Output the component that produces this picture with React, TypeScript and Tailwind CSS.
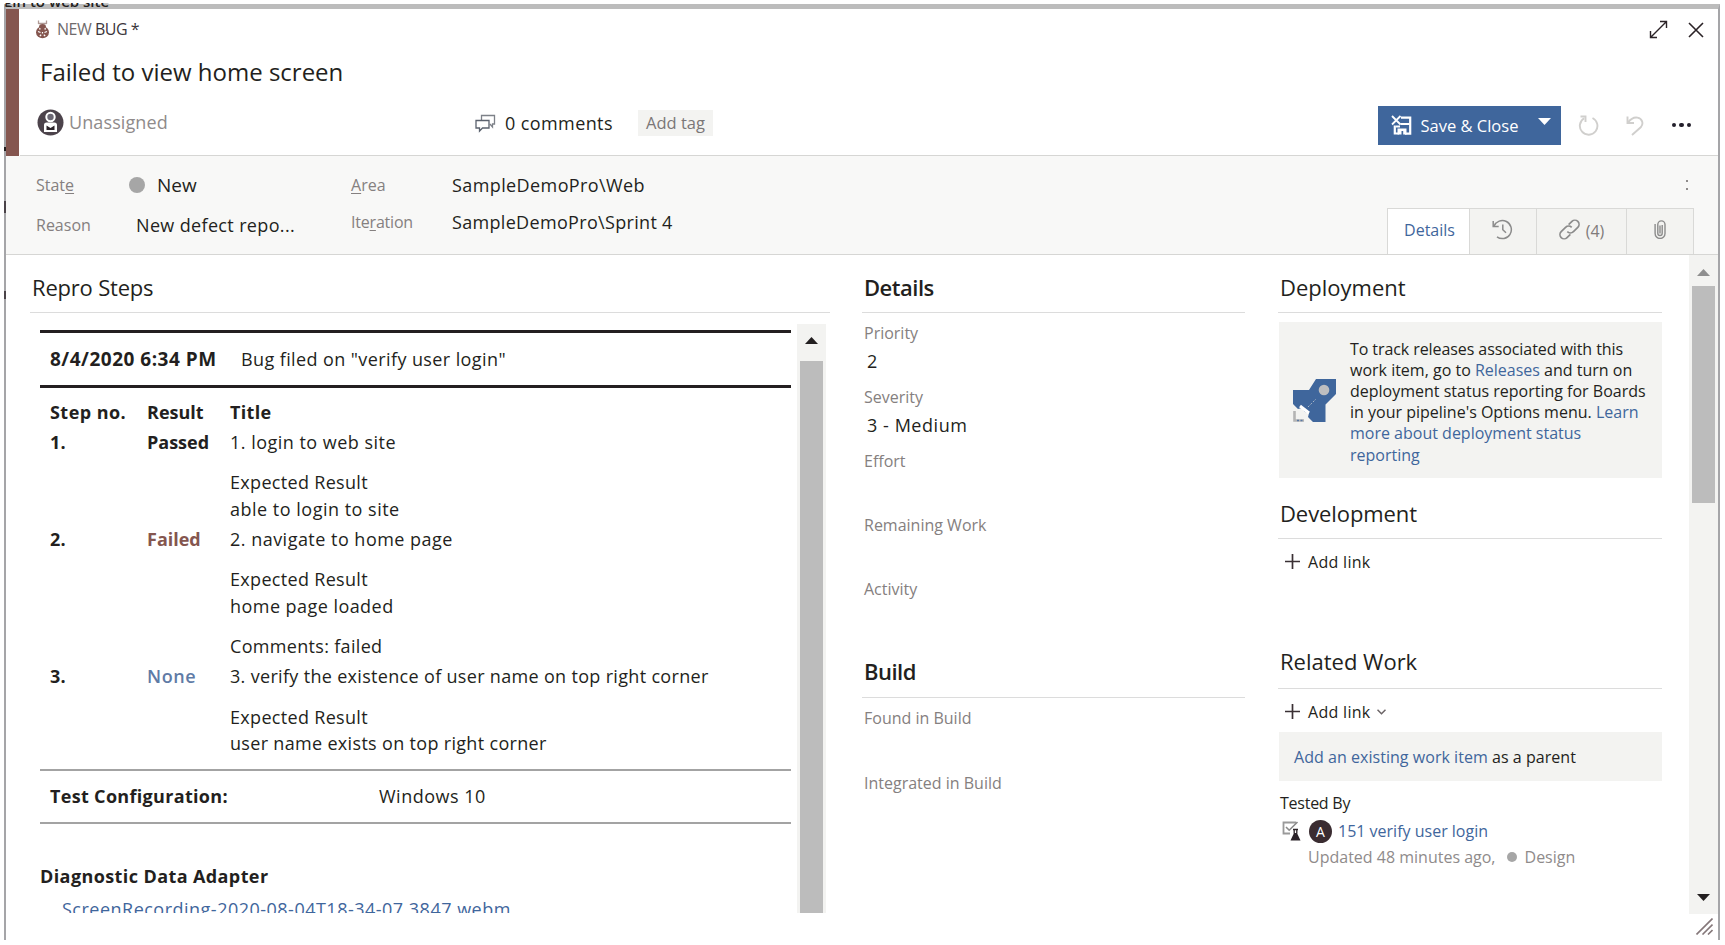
import type { ReactNode } from "react";

function BugIcon() {
  return (
    <svg width="15" height="19" viewBox="0 0 15 19" fill="none" className="shrink-0">
      <path d="M3.500 .5v3.500M11.500 .5v3.500M3.500 3.500h8" stroke="#b09a96" strokeWidth="1.300" />
      <path d="M4 7a3.500 3 0 0 1 7 0z" fill="#85564f" />
      <ellipse cx="7.500" cy="12.300" rx="6.500" ry="6" fill="#85564f" />
      <path d="M3 11.500l2.500 1M9.500 12.500l2.500-1M7.500 12v1.600M4.800 16l1.400-1.200M8.800 14.800l1.400 1.200M4 8.800h1.600M9.400 8.800h1.600" stroke="#fff" strokeWidth="1.200" />
    </svg>
  );
}

function PersonAvatar() {
  return (
    <svg width="27" height="27" viewBox="0 0 27 27" fill="none" className="shrink-0">
      <circle cx="13.5" cy="13.5" r="13" fill="#4c434b" />
      <circle cx="13.5" cy="8" r="4.200" fill="#6b6773" stroke="#fff" strokeWidth="2" />
      <path d="M7 23v-7a2.600 2.600 0 0 1 2.600-2.600h7.800a2.600 2.600 0 0 1 2.600 2.600v7z" fill="#fff" />
      <path d="M9.500 21v-4.600l4 2.500 4-2.500V21z" fill="#2b2329" />
    </svg>
  );
}

function CommentsIcon() {
  return (
    <svg width="21" height="19" viewBox="0 0 21 19" fill="none" className="shrink-0">
      <path d="M6.500 6V1.500h13v8.500h-2v3l-2.600-3" stroke="#7d8188" strokeWidth="1.300" />
      <path d="M1 6.500h13v7.500H7.500l-3 3.200V14H1z" fill="#fff" stroke="#5b626e" strokeWidth="1.300" />
    </svg>
  );
}

function ExpandIcon() {
  return (
    <svg width="19" height="19" viewBox="0 0 19 19" fill="none" stroke="#2b2327" strokeWidth="1.400">
      <path d="M1.500 17.500L17.500 1.500M11 1.500h6.500V8M1.500 11v6.500H8" />
    </svg>
  );
}

function CloseIcon() {
  return (
    <svg width="16" height="16" viewBox="0 0 16 16" fill="none" stroke="#2b2327" strokeWidth="1.600">
      <path d="M1 1l14 14M15 1L1 15" />
    </svg>
  );
}

function SaveCloseIcon() {
  return (
    <svg width="21" height="20" viewBox="0 0 21 20" fill="none" className="shrink-0">
      <path d="M10 2.600h9.200v16H14M3.800 10.500v8H8" stroke="#fff" strokeWidth="2.200" />
      <path d="M9.500 9h9M5 11.500h4" stroke="#fff" strokeWidth="2" />
      <path d="M6.500 19.500v-6h9v6h-3.300v-3.500h-1.700v3.500z" fill="#fff" />
      <path d="M1 1l8.500 8.500M9.500 1L1 9.500" stroke="#fff" strokeWidth="1.800" />
    </svg>
  );
}

function RefreshIcon() {
  return (
    <svg width="21" height="21" viewBox="0 0 21 21" fill="none" stroke="#d0cfcd" strokeWidth="1.900">
      <path d="M14.500 3a8.800 8.800 0 1 1-8.300.3" />
      <path d="M2.500 1.500h5v5.500" />
    </svg>
  );
}

function UndoIcon() {
  return (
    <svg width="18" height="21" viewBox="0 0 18 21" fill="none" stroke="#d0cfcd" strokeWidth="1.900">
      <path d="M1.500 1.500v6.500H8" />
      <path d="M1.800 7.600C5 3.500 8.500 2 11.500 2.600c4.800 1 6.300 6 3.500 9.400L6 20" />
    </svg>
  );
}

function HistoryIcon() {
  return (
    <svg width="21" height="21" viewBox="0 0 21 21" fill="none" stroke="#8b8b8b" strokeWidth="1.500">
      <path d="M1.200 2v5.500h5.500" />
      <path d="M2 7.200A9 9 0 1 1 5 17.800" />
      <path d="M10.800 5.500v5.300l3.200 3" />
    </svg>
  );
}

function LinkIcon() {
  return (
    <svg width="21" height="21" viewBox="0 0 24 24" fill="none" stroke="#8b8b8b" strokeWidth="1.900">
      <path d="M9.500 14.500a5 5 0 0 0 7 0l5-5A4.700 4.700 0 0 0 14.800 2.800L11 6.500" />
      <path d="M14.500 9.500a5 5 0 0 0-7 0l-5 5a4.700 4.700 0 0 0 6.700 6.700L13 17.500" />
    </svg>
  );
}

function ClipIcon() {
  return (
    <svg width="12" height="19" viewBox="0 0 12 19" fill="none" stroke="#8b8b8b" strokeWidth="1.400">
      <path d="M8.200 5v8.300a2.200 2.200 0 0 1-4.400 0V4.500a3.500 3.500 0 0 1 7.200 0v9a4.900 4.900 0 0 1-9.900 0V4" />
      <path d="M6 5.500v8" />
    </svg>
  );
}

function RocketIcon() {
  return (
    <svg width="44" height="43" viewBox="0 0 44 43" className="shrink-0">
      <path d="M23 0h20v15l-10.500 10.500V43H20l-5-5 1-4-4-1-3-4-4 1-5-5V11h16z" fill="#3f669c" />
      <circle cx="31" cy="11" r="5.300" fill="#bdbec0" />
      <path d="M15 28l8-8" stroke="#a9b5c7" strokeWidth="1" strokeDasharray="2 1.500" />
      <path d="M7 27l9 7" stroke="#fff" strokeWidth="3" />
      <path d="M1.500 32v9.500H11" fill="none" stroke="#b4b4b4" strokeWidth="2.600" />
      <path d="M4 41.500h7" stroke="#5878a5" strokeWidth="1.400" strokeDasharray="2 1.500" />
    </svg>
  );
}

function TestCaseIcon() {
  return (
    <svg width="19" height="20" viewBox="0 0 19 20" fill="none" className="shrink-0">
      <path d="M14 1.500H1.500v11H8" stroke="#9a9a9a" strokeWidth="1.800" />
      <path d="M4 6l3.200 3.200L15.500 1" stroke="#8a8a8a" strokeWidth="1.600" />
      <path d="M11 8.500h5M12.200 8.500v4M14.800 8.500v4" stroke="#2b2327" strokeWidth="1.300" />
      <path d="M12 12h3l3.500 7.500h-10z" fill="#2b2329" />
    </svg>
  );
}

function PlusIcon() {
  return (
    <svg width="15" height="15" viewBox="0 0 15 15" stroke="#3a3034" strokeWidth="1.700" className="shrink-0">
      <path d="M7.500 0v15M0 7.500h15" />
    </svg>
  );
}

function Arrow({ up = false, color }: { up?: boolean; color: string }) {
  return (
    <svg width="13" height="7" viewBox="0 0 13 7" fill={color} className="shrink-0">
      <path d={up ? "M0 7L6.500 0L13 7z" : "M0 0L6.500 7L13 0z"} />
    </svg>
  );
}

function Step({ no, result, resultClass, title, children }: { no: string; result: string; resultClass: string; title: ReactNode; children: ReactNode }) {
  return (
    <div className="grid grid-cols-[97px_83px_1fr] pt-[3.5px] pl-[10px] leading-[26.5px]">
      <div className="font-bold">{no}</div>
      <div className={resultClass}>{result}</div>
      <div className="whitespace-nowrap">
        <p>{title}</p>
        {children}
      </div>
    </div>
  );
}

function Field({ label, value }: { label: string; value?: string }) {
  return (
    <div className="h-[64px] pt-[6.5px] pl-[2px]">
      <div className="text-[16px] leading-[26px] text-[#858080]">{label}</div>
      {value && <div className="pl-[3px] text-[18px] leading-[31px] tracking-[0.55px]">{value}</div>}
    </div>
  );
}

export default function App() {
  return (
    <div className="relative h-[945px] w-[1725px] overflow-hidden bg-white pt-[4px] pl-[4px] font-['Open_Sans','Noto_Sans',sans-serif] text-[#231f20]">
      <div className="flex h-[936px] w-[1716px] flex-col border-x-2 border-t-[5px] border-x-[#a5a5a8] border-t-[#bcbcbc] bg-white">
        <header className="flex h-[147px] shrink-0">
          <div className="mr-px w-[13px] bg-[#85564f]" />
          <div className="flex flex-1 flex-col border-b border-[#d6d6d4]">
            <div className="flex h-[41px] items-center pl-[15px]">
              <BugIcon />
              <div className="ml-[7px] pb-px text-[16px] leading-[24px] tracking-[-0.5px] text-[#6f6b6d]">
                NEW <span className="text-[#3c363c]">BUG *</span>
              </div>
              <div className="ml-auto flex items-center gap-[20px] pr-[14px]">
                <ExpandIcon />
                <CloseIcon />
              </div>
            </div>
            <div className="h-[43px] pl-[20px] text-[24px] leading-[43px]">Failed to view home screen</div>
            <div className="flex h-[59px] items-center text-[18px]">
              <div className="flex w-[455px] items-center gap-[5px] pl-[17px]">
                <PersonAvatar />
                <span className="pb-px tracking-[0.1px] text-[#8f8b8b]">Unassigned</span>
              </div>
              <div className="flex w-[163px] items-center gap-[9px] pt-[2px] whitespace-nowrap">
                <CommentsIcon />
                <span className="tracking-[0.4px]">0 comments</span>
              </div>
              <div className="h-[26px] w-[75px] bg-[#f3f3f1] text-center text-[16.500px] leading-[26px] text-[#7b7777]">Add tag</div>
              <div className="ml-auto flex items-center pt-[5px]">
                <div className="flex h-[39px] w-[183px] items-center bg-[#3f669c] pl-[13px] text-white">
                  <SaveCloseIcon />
                  <span className="ml-[9px] pt-[2px] text-[16.500px]">Save &amp; Close</span>
                  <span className="mb-[8px] ml-[20px]"><Arrow color="#fff" /></span>
                </div>
                <div className="ml-[17px]"><RefreshIcon /></div>
                <div className="ml-[27px]"><UndoIcon /></div>
                <div className="mr-[27px] ml-[28px] flex gap-[3px]">
                  <span className="size-[4.500px] rounded-full bg-[#231f2b]" />
                  <span className="size-[4.500px] rounded-full bg-[#231f2b]" />
                  <span className="size-[4.500px] rounded-full bg-[#231f2b]" />
                </div>
              </div>
            </div>
          </div>
        </header>

        <section className="flex h-[99px] shrink-0 border-b border-[#d6d6d4] bg-[#f8f8f7] text-[18px] whitespace-nowrap">
          <div className="w-[315px] pt-[9px] pl-[30px]">
            <div className="flex h-[40px] items-center">
              <span className="w-[93px] text-[16px] text-[#858080]">Stat<span className="underline underline-offset-2">e</span></span>
              <span className="size-[16px] rounded-full bg-[#a6a6a6]" />
              <span className="ml-[12px] text-[19px] leading-[38px]">New</span>
            </div>
            <div className="flex h-[40px] items-center">
              <span className="w-[100px] text-[16px] text-[#858080]">Reason</span>
              <span className="tracking-[0.350px]">New defect repo...</span>
            </div>
          </div>
          <div className="pt-[10px] pl-[30px]">
            <div className="flex h-[38px] items-center">
              <span className="w-[101px] text-[16px] text-[#858080]"><span className="underline underline-offset-2">A</span>rea</span>
              <span className="tracking-[0.400px]">SampleDemoPro\Web</span>
            </div>
            <div className="flex h-[36px] items-center">
              <span className="w-[101px] text-[16px] tracking-[-0.200px] text-[#858080]">Ite<span className="underline underline-offset-2">r</span>ation</span>
              <span className="tracking-[0.320px]">SampleDemoPro\Sprint 4</span>
            </div>
          </div>
          <div className="ml-auto flex flex-col items-end">
            <div className="mt-[24px] mr-[30px] flex h-[28px] flex-col gap-[6px]">
              <span className="size-[2px] bg-[#8f8b8b]" />
              <span className="size-[2px] bg-[#8f8b8b]" />
            </div>
            <div className="mr-[24px] flex h-[47px] border border-b-0 border-[#d9d9d7] bg-[#f3f3f1] text-[16px] text-[#7f7b7b]">
              <div className="flex w-[81px] items-center justify-center bg-white pb-[3px] pl-[2px] text-[#3f669c]">Details</div>
              <div className="flex w-[67px] items-center justify-center border-l border-[#d9d9d7] pr-px pb-[4px]"><HistoryIcon /></div>
              <div className="flex w-[90px] items-center justify-center gap-[6px] border-l border-[#d9d9d7] pb-[4px]">
                <LinkIcon />
                <span className="pt-[3px]">(4)</span>
              </div>
              <div className="flex w-[67px] items-center justify-center border-l border-[#d9d9d7] pb-[4px]"><ClipIcon /></div>
            </div>
          </div>
        </section>

        <main className="flex h-[659px] shrink-0">
          <section className="ml-[24px] flex w-[800px] shrink-0 flex-col">
            <h2 className="h-[58px] shrink-0 border-b border-[#dcdcdc] pt-[16px] pl-[2px] text-[22px] leading-[33px] tracking-[-0.200px]">Repro Steps</h2>
            <div className="mt-[11px] flex h-[589px] overflow-hidden">
              <div className="ml-[10px] w-[751px] overflow-hidden pt-[6px] text-[18px] tracking-[0.320px] whitespace-nowrap">
                <div className="flex h-[58px] items-center border-y-[3px] border-[#231f20] pl-[10px]">
                  <span className="w-[191px] text-[19px] tracking-[0.500px]"><b>8/4/2020 6:34 PM</b></span>
                  <span className="tracking-[0.400px]">Bug filed on "verify user login"</span>
                </div>
                <div className="mt-[9px] grid h-[28px] grid-cols-[97px_83px_1fr] pl-[10px] leading-[30px] font-bold">
                  <span className="tracking-[0.450px]">Step no.</span>
                  <span className="tracking-normal">Result</span>
                  <span>Title</span>
                </div>
                <Step no="1." result="Passed" resultClass="font-bold tracking-normal" title={<span className="tracking-[0.480px]">1. login to web site</span>}>
                  <p className="mt-[14px]">Expected Result</p>
                  <p className="tracking-[0.500px]">able to login to site</p>
                </Step>
                <Step no="2." result="Failed" resultClass="font-bold tracking-normal text-[#85564f]" title={<span className="tracking-[0.480px]">2. navigate to home page</span>}>
                  <p className="mt-[14px]">Expected Result</p>
                  <p className="tracking-[0.450px]">home page loaded</p>
                  <p className="mt-[14px]">Comments: failed</p>
                </Step>
                <Step no="3." result="None" resultClass="font-semibold tracking-[0.600px] text-[#5f7ba6]" title="3. verify the existence of user name on top right corner">
                  <p className="mt-[14px]">Expected Result</p>
                  <p>user name exists on top right corner</p>
                </Step>
                <div className="mt-[12px] flex h-[55px] items-center border-y-2 border-[#a3a3a3] pl-[10px]">
                  <b className="w-[329px]">Test Configuration:</b>
                  <span className="tracking-[0.500px]">Windows 10</span>
                </div>
                <div className="mt-[39px] leading-[27px] font-bold tracking-[0.400px]">Diagnostic Data Adapter</div>
                <div className="pl-[22px] leading-[38px] tracking-[0.490px] text-[#3f669c]">ScreenRecording-2020-08-04T18-34-07.3847.webm</div>
              </div>
              <div className="ml-[6px] flex w-[29px] flex-col items-center bg-[#f3f3f1]">
                <div className="flex h-[37px] items-center pb-[4px]"><Arrow up color="#231f20" /></div>
                <div className="w-[23px] flex-1 bg-[#bcbcbc]" />
              </div>
            </div>
          </section>

          <section className="ml-[32px] w-[383px] shrink-0">
            <h2 className="h-[58px] border-b border-[#dcdcdc] pt-[16px] pl-[2px] text-[22px] leading-[33px] font-semibold tracking-[-0.500px]">Details</h2>
            <Field label="Priority" value="2" />
            <Field label="Severity" value="3 - Medium" />
            <Field label="Effort" />
            <Field label="Remaining Work" />
            <Field label="Activity" />
            <h2 className="h-[65px] border-b border-[#dcdcdc] pt-[22px] pl-[2px] text-[22px] leading-[33px] font-semibold tracking-[-0.500px]">Build</h2>
            <Field label="Found in Build" />
            <div className="pt-px"><Field label="Integrated in Build" /></div>
          </section>

          <section className="ml-[33px] w-[384px] shrink-0 text-[16px]">
            <h2 className="h-[58px] border-b border-[#dcdcdc] pt-[16px] pl-[2px] text-[22px] leading-[33px] font-medium">Deployment</h2>
            <div className="mt-[9px] ml-[1px] flex h-[156px] bg-[#f3f3f1] pl-[14px]">
              <div className="pt-[57px]"><RocketIcon /></div>
              <p className="ml-[13px] pt-[16.500px] leading-[21.200px] whitespace-nowrap">
                <span className="tracking-[-0.080px]">To track releases associated with this</span><br />
                work item, go to <span className="text-[#3f669c]">Releases</span> and turn on<br />
                deployment status reporting for Boards<br />
                in your pipeline's Options menu. <span className="text-[#3f669c]">Learn</span><br />
                <span className="text-[#3f669c]">more about deployment status<br />reporting</span>
              </p>
            </div>
            <h2 className="flex h-[61px] items-end border-b border-[#dcdcdc] pb-[8px] pl-[2px] text-[22px] leading-[33px] font-medium tracking-[-0.090px]">Development</h2>
            <div className="flex h-[45px] items-center gap-[8px] pl-[7px] tracking-[0.300px]"><PlusIcon />Add link</div>
            <h2 className="flex h-[105px] items-end border-b border-[#dcdcdc] pb-[10px] pl-[2px] text-[22px] leading-[33px] font-medium">Related Work</h2>
            <div className="flex h-[43px] items-center gap-[8px] pt-[2px] pl-[7px] tracking-[0.300px]">
              <PlusIcon />Add link
              <svg width="9" height="6" viewBox="0 0 9 6" fill="none" stroke="#6b6466" strokeWidth="1.500" className="-ml-[2px]"><path d="M.5.8l4 4 4-4" /></svg>
            </div>
            <div className="ml-[1px] flex h-[49px] items-center bg-[#f3f3f1] pl-[15px]">
              <span className="tracking-[0.040px]"><span className="text-[#3f669c]">Add an existing work item</span> as a parent</span>
            </div>
            <div className="mt-[8px] pl-[2px] leading-[28px] tracking-[-0.250px]">Tested By</div>
            <div className="flex h-[28px] items-center pl-[4px] text-[#3f669c]">
              <TestCaseIcon />
              <span className="ml-[8px] flex size-[23px] items-center justify-center rounded-full bg-[#3a2c31] text-[14px] text-white">A</span>
              <span className="ml-[6px]">151 verify user login</span>
            </div>
            <div className="flex h-[23px] items-center pl-[30px] text-[#8f8b8b]">
              Updated 48 minutes ago,
              <span className="mr-[8px] ml-[11px] size-[10px] rounded-full bg-[#a6a6a6]" />
              Design
            </div>
          </section>

          <div className="ml-auto flex w-[29px] flex-col items-center bg-[#f3f3f1] pr-px">
            <div className="flex h-[31px] items-center pt-[3px]"><Arrow up color="#8f8f8f" /></div>
            <div className="h-[217px] w-[23px] bg-[#bcbcbc]" />
            <div className="mt-auto mb-[13px]"><Arrow color="#231f20" /></div>
          </div>
        </main>

        <footer className="flex justify-end pt-[4px] pr-[5px]">
          <svg width="17" height="17" viewBox="0 0 17 17" stroke="#85787a" strokeWidth="1.600">
            <path d="M.5 16.500l16-16M6.500 16.500l10-10M12 16.500l4.500-4.500" />
          </svg>
        </footer>
      </div>

      <div className="absolute top-[3px] left-[4px] h-[4px] w-[110px] overflow-hidden text-[15px] leading-[18px] font-semibold whitespace-nowrap">
        <div className="-mt-[11px]">gin to web site</div>
      </div>
      <div className="absolute top-[147px] left-[4px] h-[4px] w-[2px] bg-[#231f20]" />
      <div className="absolute top-[201px] left-[4px] h-[12px] w-[2px] bg-[#4a4348]" />
      <div className="absolute top-[291px] left-[4px] h-[8px] w-[2px] bg-[#4a4348]" />
    </div>
  );
}
